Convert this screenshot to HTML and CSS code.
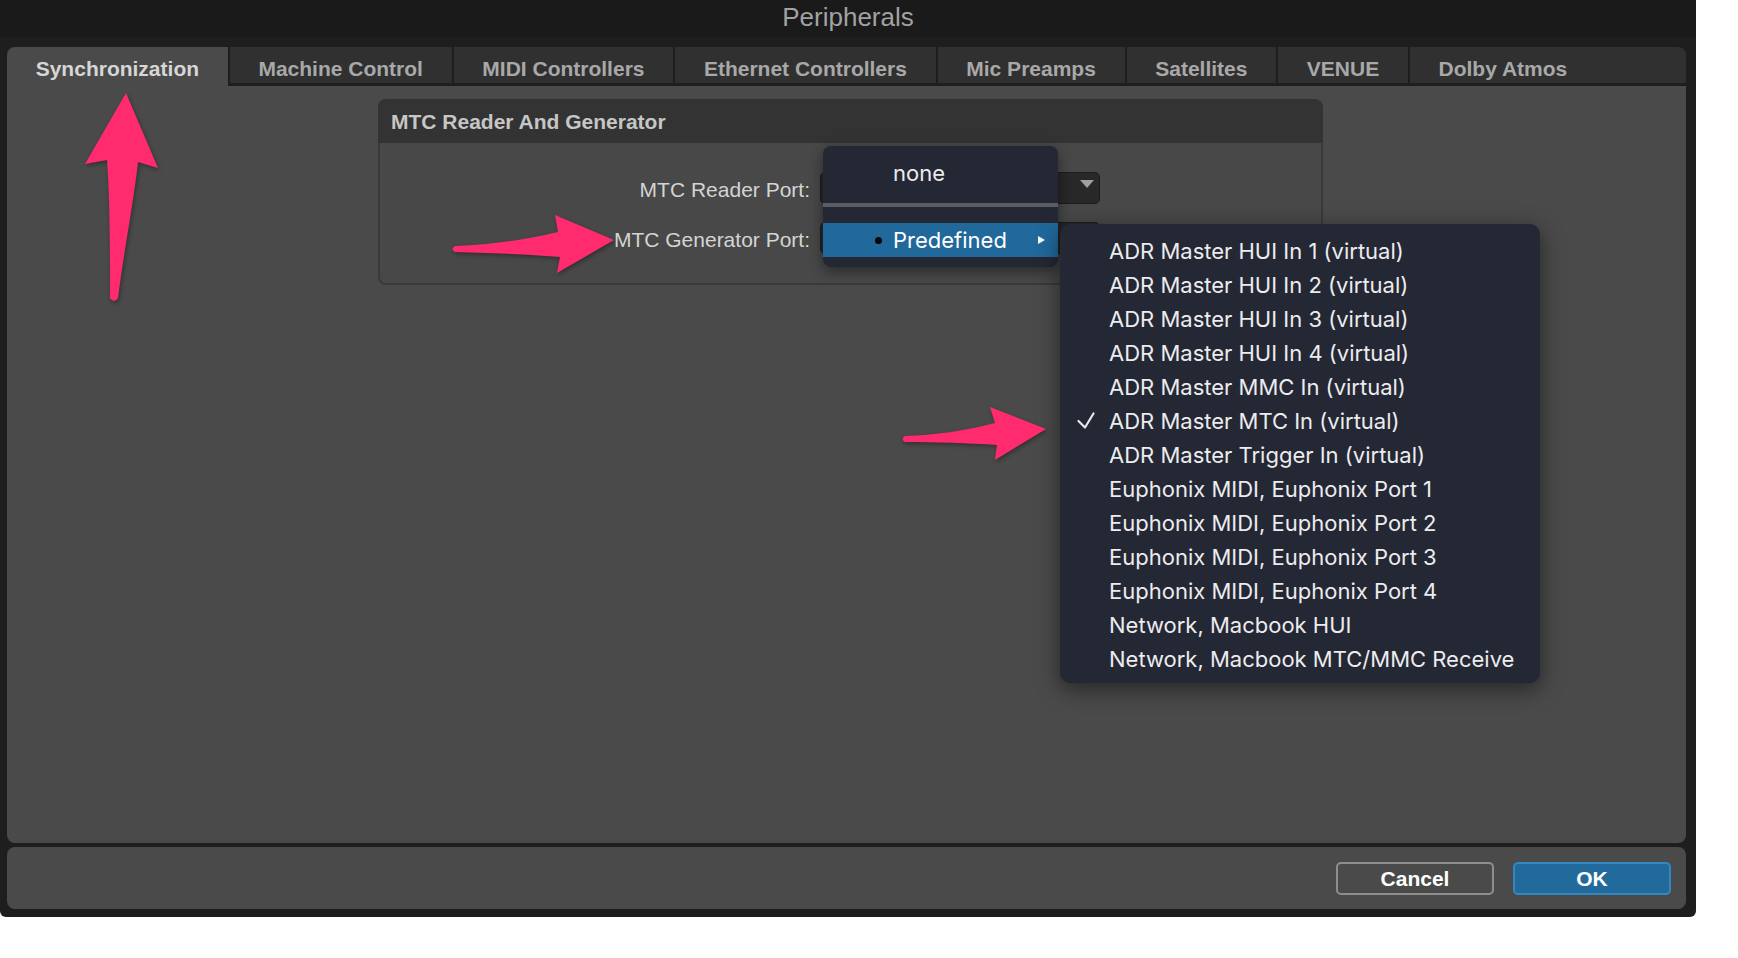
FILE: index.html
```html
<!DOCTYPE html>
<html lang="en">
<head>
    <meta charset="UTF-8">
    <title>Peripherals</title>
    <link rel="stylesheet" href="styles.css">
</head>
<body>
    <div class="window">
        <div class="titlebar">Peripherals</div>
        <div class="frame">
            <div class="tabs">
                <div class="tab active">Synchronization</div>
                <div class="tab">Machine Control</div>
                <div class="tab">MIDI Controllers</div>
                <div class="tab">Ethernet Controllers</div>
                <div class="tab">Mic Preamps</div>
                <div class="tab">Satellites</div>
                <div class="tab">VENUE</div>
                <div class="tab">Dolby Atmos</div>
                <div class="tab-fill"></div>
            </div>
            <div class="panel">
                <div class="group">
                    <div class="group-title">MTC Reader And Generator</div>
                    <div class="group-body">
                        <div class="row">
                            <span class="port-label">MTC Reader Port:</span>
                            <div class="select"><span class="caret"></span></div>
                        </div>
                        <div class="row">
                            <span class="port-label">MTC Generator Port:</span>
                            <div class="select"><span class="caret"></span></div>
                        </div>
                    </div>
                </div>
            </div>
            <div class="footer">
                <button class="btn btn-cancel">Cancel</button>
                <button class="btn btn-ok">OK</button>
            </div>
        </div>

        <!-- open popup of the generator port -->
        <div class="popup">
            <div class="menu-item menu-none">none</div>
            <div class="menu-sep"></div>
            <div class="menu-gap"></div>
            <div class="menu-item selected">
                <span class="bullet"></span>
                <span class="menu-text">Predefined</span>
                <span class="submenu-arrow"></span>
            </div>
        </div>

        <div class="submenu">
            <div class="sub-item">ADR Master HUI In 1 (virtual)</div>
            <div class="sub-item">ADR Master HUI In 2 (virtual)</div>
            <div class="sub-item">ADR Master HUI In 3 (virtual)</div>
            <div class="sub-item">ADR Master HUI In 4 (virtual)</div>
            <div class="sub-item">ADR Master MMC In (virtual)</div>
            <div class="sub-item checked">
                <svg class="check" width="18" height="17" viewBox="0 0 18 17"><path d="M1.5 9 L8 15.5 L16.5 1.5" fill="none" stroke="#e8e8ea" stroke-width="2.2" stroke-linecap="round" stroke-linejoin="round"/></svg>
                ADR Master MTC In (virtual)
            </div>
            <div class="sub-item">ADR Master Trigger In (virtual)</div>
            <div class="sub-item">Euphonix MIDI, Euphonix Port 1</div>
            <div class="sub-item">Euphonix MIDI, Euphonix Port 2</div>
            <div class="sub-item">Euphonix MIDI, Euphonix Port 3</div>
            <div class="sub-item">Euphonix MIDI, Euphonix Port 4</div>
            <div class="sub-item">Network, Macbook HUI</div>
            <div class="sub-item">Network, Macbook MTC/MMC Receive</div>
        </div>
    </div>

    <svg class="annotations" width="1738" height="958" viewBox="0 0 1738 958">
        <path d="M126,93 L158,168 L138,162 C134,200 124,250 118,298 Q114,304 110,298 C110,250 110,200 107,160 L85,164 Z"/>
        <path d="M614,240 L557,273 L560,257 C530,254 490,253 455,252 Q450,249 455,246 C490,245 525,240 558,232 L555,215 Z"/>
        <path d="M1046,429 L995,460 L997,445 C970,443 935,442 905,442 Q900,439 905,436 C935,435 965,431 995,423 L990,407 Z"/>
    </svg>
</body>
</html>
```

FILE: styles.css
```css
body {
    margin: 0;
    background: #ffffff;
    font-family: 'Liberation Sans', Arial, sans-serif;
    position: relative;
    width: 1738px;
    height: 958px;
    overflow: hidden;
}
.window {
    position: relative;
    width: 1696px;
    height: 917px;
    background: #1e1e1e;
    border-radius: 0 0 6px 6px;
    display: flex;
    flex-direction: column;
}
.titlebar {
    height: 37px;
    line-height: 34px;
    background: #1a1a1a;
    color: #a2a2a2;
    font-size: 26px;
    text-align: center;
}
.frame {
    flex: 1;
    display: flex;
    flex-direction: column;
    padding: 10px 10px 8px 7px;
}
.tabs {
    display: flex;
    height: 39px;
}
.tab {
    padding: 7px 28.7px 0;
    display: flex;
    align-items: center;
    font-size: 21px;
    font-weight: bold;
    color: #a8a8a8;
    background: #303030;
    border-left: 2px solid #1e1e1e;
    border-bottom: 3px solid #1e1e1e;
    white-space: nowrap;
}
.tab.active {
    background: #4a4a4a;
    color: #d6d6d6;
    border-left: none;
    border-bottom: none;
    padding-top: 4px;
    border-radius: 8px 0 0 0;
}
.tab-fill {
    flex: 1;
    background: #303030;
    border-bottom: 3px solid #1e1e1e;
    border-radius: 0 8px 0 0;
}
.panel {
    height: 757px;
    background: #4a4a4a;
    border-radius: 0 0 8px 8px;
    padding-top: 13px;
    box-sizing: border-box;
}
.group {
    width: 945px;
    margin-left: 371px;
}
.group-title {
    height: 44px;
    background: #333333;
    border-radius: 8px 8px 0 0;
    padding-left: 13px;
    padding-top: 2px;
    box-sizing: border-box;
    display: flex;
    align-items: center;
    font-size: 21px;
    font-weight: bold;
    color: #c6c6c6;
}
.group-body {
    height: 142px;
    box-sizing: border-box;
    background: #484848;
    border: 2px solid #3a3a3a;
    border-top: none;
    border-radius: 0 0 8px 8px;
    padding-top: 29px;
    display: flex;
    flex-direction: column;
    gap: 18px;
}
.row {
    display: flex;
    align-items: center;
    gap: 10px;
    height: 32px;
}
.port-label {
    width: 430px;
    text-align: right;
    font-size: 21px;
    color: #d4d4d4;
    padding-top: 3px;
}
.select {
    position: relative;
    width: 280px;
    height: 32px;
    box-sizing: border-box;
    background: #282828;
    border: 1px solid #1c1c1c;
    border-radius: 5px;
}
.caret {
    position: absolute;
    right: 5px;
    top: 7px;
    width: 0;
    height: 0;
    border-left: 7px solid transparent;
    border-right: 7px solid transparent;
    border-top: 8px solid #a0a0a0;
}
.footer {
    margin-top: 4px;
    height: 62px;
    background: #4a4a4a;
    border-radius: 8px;
    display: flex;
    justify-content: flex-end;
    align-items: center;
    gap: 19px;
    padding-right: 15px;
}
.btn {
    width: 158px;
    height: 33px;
    border-radius: 5px;
    font-family: 'Liberation Sans', Arial, sans-serif;
    font-size: 21px;
    font-weight: bold;
    color: #ffffff;
    cursor: pointer;
    padding: 2px 0 0;
}
.btn-cancel {
    background: #4a4a4a;
    border: 2px solid #8e8e8e;
}
.btn-ok {
    background: #226a9b;
    border: 2px solid #3388c4;
}

/* popup menus */
.popup {
    position: absolute;
    left: 823px;
    top: 146px;
    width: 235px;
    height: 121px;
    background: #242734;
    border-radius: 8px;
    box-shadow: 0 4px 14px rgba(0, 0, 0, 0.45);
    font-family: Inter, 'Liberation Sans', sans-serif;
    font-size: 22px;
    color: #ececee;
    overflow: hidden;
}
.menu-item {
    display: flex;
    align-items: center;
    padding-left: 70px;
    position: relative;
}
.menu-none {
    height: 57px;
    padding-bottom: 3px;
    box-sizing: border-box;
}
.menu-sep {
    height: 4px;
    background: #595c63;
}
.menu-gap {
    height: 16px;
}
.menu-item.selected {
    height: 34px;
    background: #21689b;
    color: #ffffff;
}
.bullet {
    position: absolute;
    left: 52px;
    top: 14px;
    width: 7px;
    height: 7px;
    border-radius: 50%;
    background: #050505;
}
.submenu-arrow {
    position: absolute;
    left: 215px;
    top: 13px;
    width: 0;
    height: 0;
    border-top: 4px solid transparent;
    border-bottom: 4px solid transparent;
    border-left: 7px solid #ffffff;
}
.submenu {
    position: absolute;
    left: 1060px;
    top: 224px;
    width: 480px;
    height: 459px;
    box-sizing: border-box;
    padding: 10px 0 7px;
    background: #242734;
    border-radius: 10px;
    box-shadow: 0 6px 22px rgba(0, 0, 0, 0.5);
    font-family: Inter, 'Liberation Sans', sans-serif;
    font-size: 22px;
    color: #ececee;
}
.sub-item {
    position: relative;
    height: 34px;
    line-height: 34px;
    padding-left: 49px;
    white-space: nowrap;
}
.check {
    position: absolute;
    left: 17px;
    top: 8px;
}

.annotations {
    position: absolute;
    left: 0;
    top: 0;
    pointer-events: none;
    fill: #ff2b6e;
    filter: drop-shadow(1px 2px 2px rgba(0, 0, 0, 0.35));
}
```
